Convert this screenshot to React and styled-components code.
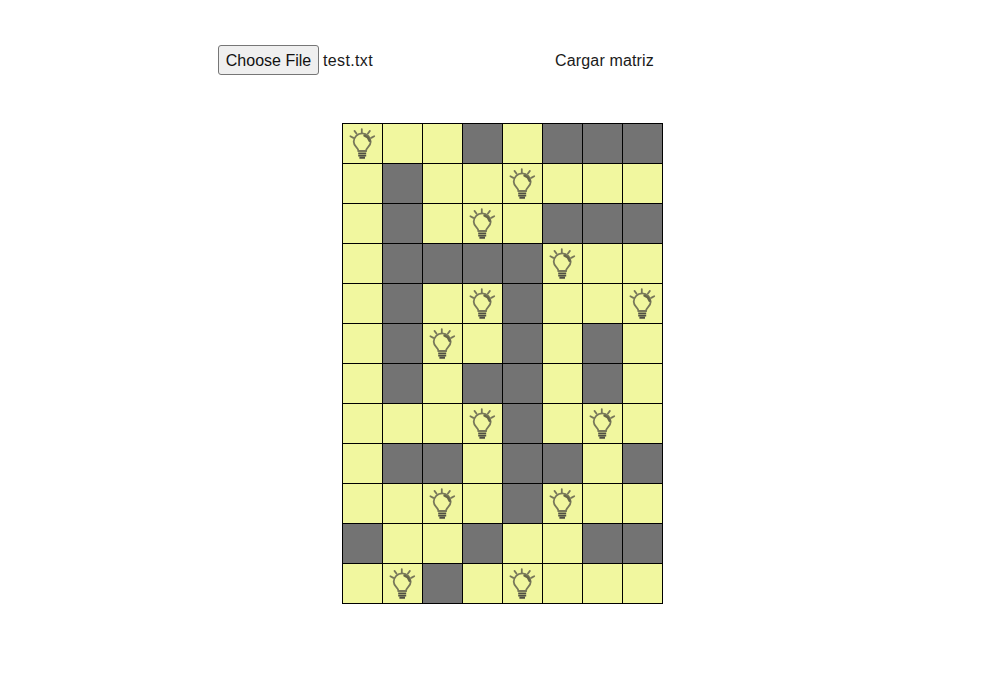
import React from "react";
import styled, { createGlobalStyle } from "styled-components";

const Global = createGlobalStyle`
  html, body { margin: 0; padding: 0; background: #fff; }
  body { font-family: "Liberation Sans", Arial, sans-serif; font-size: 16px; color: #1a1a1a; }
`;

const Page = styled.div`
  width: 1001px;
  height: 680px;
  display: flex;
  flex-direction: column;
  padding-top: 45px;
  box-sizing: border-box;
`;

const Toolbar = styled.div`
  display: flex;
  align-items: center;
  height: 30px;
  padding-left: 218px;
`;

const FileButton = styled.button`
  width: 101px;
  height: 30px;
  box-sizing: border-box;
  padding: 1px 0 0;
  background: #efefef;
  border: 1px solid #767676;
  border-radius: 3px;
  font-family: inherit;
  font-size: 16px;
  color: #111;
`;

const FileName = styled.span`
  margin-left: 4px;
  padding-top: 1px;
  width: 232px;
  letter-spacing: 0.36px;
`;

const LoadButton = styled.button`
  padding: 1px 0 0;
  background: none;
  border: 0;
  font-family: inherit;
  font-size: 16px;
  letter-spacing: 0.16px;
  color: #1a1a1a;
`;

const Board = styled.div`
  display: grid;
  grid-template-columns: repeat(8, 39px);
  grid-auto-rows: 39px;
  gap: 1px;
  padding: 1px;
  margin: 48px 0 0 342px;
  width: max-content;
  background: #000;
`;

const Cell = styled.div`
  background: ${(p) => (p.$wall ? "#737373" : "#f1f79f")};
  display: flex;
  align-items: center;
  justify-content: center;
`;

const Lamp = () => (
  <svg width="39" height="39" viewBox="0 0 39 39" fill="none" strokeLinecap="round">
    <g stroke="#77775a" strokeWidth="1.8">
      <path d="M7.4 12.2l3 1.7M11.5 6.9l2.1 2.8M18.8 5.2v3.8M26.9 6.9l-2.1 2.8M31.2 12.2l-3 1.7" />
      <path d="M15.4 27c0-3.3-4.7-4.7-4.7-9.2a8.5 8.5 0 0 1 17 0c0 4.5-4.7 5.9-4.7 9.2z" />
      <path d="M21.5 11.6a7.2 7.2 0 0 1 5 5.2" stroke="#66664a" strokeWidth="2.4" />
    </g>
    <path d="M15.2 29.4h8M15.2 31.6h8M16.4 33.8h5.6" stroke="#505043" strokeWidth="1.9" strokeLinecap="butt" />
  </svg>
);

const rows = [
  "L..D.DDD",
  ".D..L...",
  ".D.L.DDD",
  ".DDDDL..",
  ".D.LD..L",
  ".DL.D.D.",
  ".D.DD.D.",
  "...LD.L.",
  ".DD.DD.D",
  "..L.DL..",
  "D..D..DD",
  ".LD.L...",
];

export default function App() {
  return (
    <Page>
      <Global />
      <Toolbar>
        <FileButton type="button">Choose File</FileButton>
        <FileName>test.txt</FileName>
        <LoadButton type="button">Cargar matriz</LoadButton>
      </Toolbar>
      <Board>
        {rows.flatMap((row, r) =>
          [...row].map((c, i) => (
            <Cell key={`${r}-${i}`} $wall={c === "D"}>
              {c === "L" && <Lamp />}
            </Cell>
          ))
        )}
      </Board>
    </Page>
  );
}
